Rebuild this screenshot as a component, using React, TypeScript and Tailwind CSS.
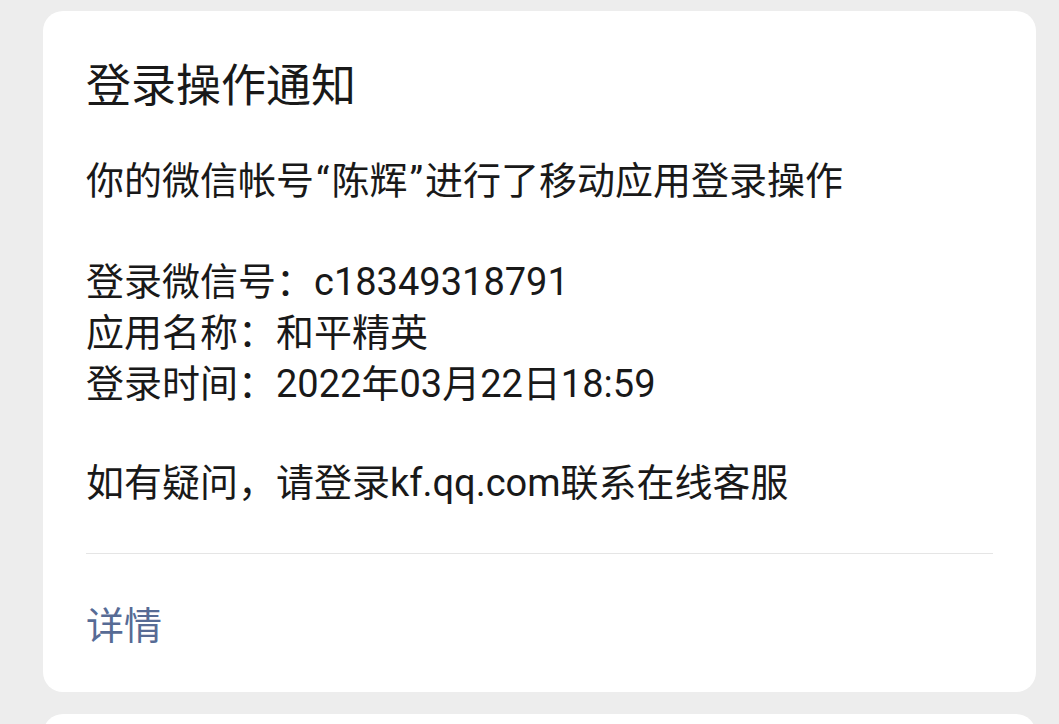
import React from "react";

const details = [
  { label: "登录微信号：", value: "c18349318791" },
  { label: "应用名称：", value: "和平精英" },
  { label: "登录时间：", value: "2022年03月22日18:59" },
];

const App = () => {
  return (
    <div
      className="bg-[#ededed] pl-[43px] pr-[23px] pt-[11px] h-[724px] overflow-hidden"
      style={{ fontFamily: 'Roboto, "Noto Sans CJK SC", sans-serif' }}
    >
      <div className="bg-white rounded-[20px] px-[43px]">
        <div className="pt-[47px] pb-[44px] text-[#191919]">
          <h1 className="text-[45px] leading-[57px] font-normal">登录操作通知</h1>
          <p className="mt-[41px] text-[38px] leading-[51px]">
            你的微信帐号<span className="mx-[2px]">“</span>陈辉
            <span className="mx-[2px]">”</span>进行了移动应用登录操作
          </p>
          <div className="mt-[50px] text-[38px] leading-[51px]">
            {details.map((d) => (
              <div key={d.label}>
                {d.label}
                {d.value}
              </div>
            ))}
          </div>
          <p className="mt-[48px] text-[38px] leading-[51px]">
            如有疑问，请登录kf.qq.com联系在线客服
          </p>
        </div>
        <div className="h-px bg-[#e5e5e5]" />
        <div className="pt-[47px] pb-[40px] text-[38px] leading-[51px] text-[#576b95]">
          详情
        </div>
      </div>
      <div className="mt-[22px] bg-white rounded-t-[20px] h-[60px]" />
    </div>
  );
};

export default App;
